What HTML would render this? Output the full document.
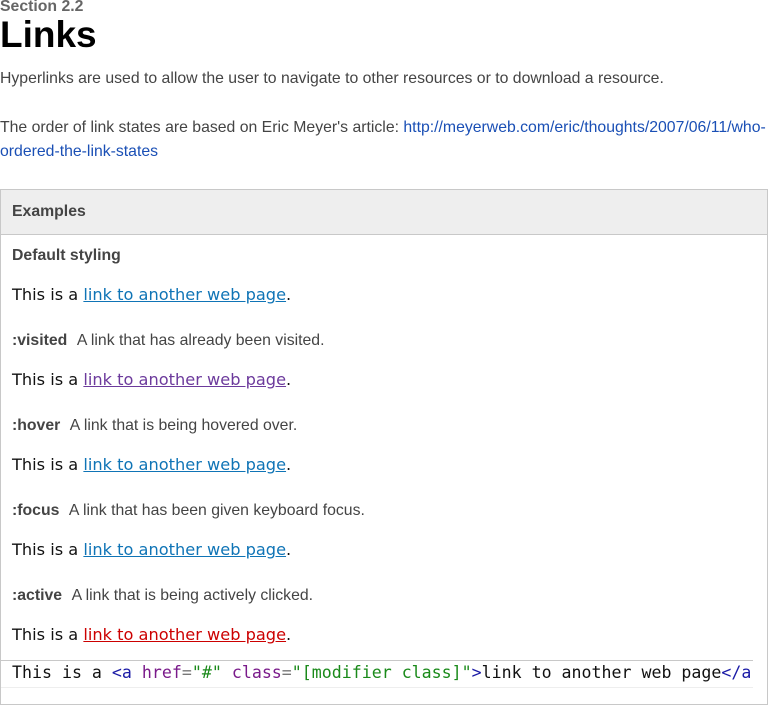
<!DOCTYPE html>
<html><head><meta charset="utf-8"><style>
body{margin:0;width:768px;height:705px;overflow:hidden;background:#fff;font-family:"Liberation Sans",Arial,sans-serif;color:#444;position:relative}
.a{position:absolute;white-space:nowrap}
.sec{left:0;top:-2px;font-size:15.8px;font-weight:bold;color:#666}
h1{position:absolute;margin:0;left:0;top:13px;font-size:37px;font-weight:bold;color:#000;line-height:44px}
.p{left:0;font-size:15.8px;color:#444}
.lnk{color:#1a4fb5}
.box{position:absolute;left:0;top:189px;width:766px;height:514px;border:1px solid #c8c8c8}
.hd{position:absolute;left:0;top:0;width:766px;height:44px;background:#eee;border-bottom:1px solid #c8c8c8}
.hd span{position:absolute;left:11px;top:13px;font-size:15.8px;font-weight:bold;color:#444}
.ex{left:11px;font-family:"DejaVu Sans",sans-serif;font-size:16.2px;color:#111}
.lb{left:11px;font-size:15.8px;color:#444}
.lb b{margin-right:6px}
.code{position:absolute;left:0;top:470px;width:752px;height:26px;border-bottom:1px solid #eee;border-top:1px solid #c8c8c8;background:#fff}
.code span.t{position:absolute;left:11px;top:2px;font-family:"DejaVu Sans Mono",monospace;font-size:16.6px;color:#111;white-space:nowrap}
</style></head><body>
<div class="a sec">Section 2.2</div>
<h1>Links</h1>
<div class="a p" style="top:70px">Hyperlinks are used to allow the user to navigate to other resources or to download a resource.</div>
<div class="a p" style="top:119px">The order of link states are based on Eric Meyer's article: <span class="lnk">http://meyerweb.com/eric/thoughts/2007/06/11/who-</span></div>
<div class="a p lnk" style="top:143px">ordered-the-link-states</div>
<div class="box">
<div class="hd"><span>Examples</span></div>
<div class="a lb" style="top:57px"><b>Default styling</b></div>
<div class="a ex" style="top:95px">This is a <u style="color:#0f74b6">link to another web page</u>.</div>
<div class="a lb" style="top:142px"><b>:visited</b> A link that has already been visited.</div>
<div class="a ex" style="top:180px">This is a <u style="color:#6c3a9c">link to another web page</u>.</div>
<div class="a lb" style="top:227px"><b>:hover</b> A link that is being hovered over.</div>
<div class="a ex" style="top:265px">This is a <u style="color:#0f74b6">link to another web page</u>.</div>
<div class="a lb" style="top:312px"><b>:focus</b> A link that has been given keyboard focus.</div>
<div class="a ex" style="top:350px">This is a <u style="color:#0f74b6">link to another web page</u>.</div>
<div class="a lb" style="top:397px"><b>:active</b> A link that is being actively clicked.</div>
<div class="a ex" style="top:435px">This is a <u style="color:#cc0000">link to another web page</u>.</div>
<div class="code"><span class="t">This is a <span style="color:#1a1aa6">&lt;a</span> <span style="color:#7a1a8a">href</span><span style="color:#777">=</span><span style="color:#1a8a1a">"#"</span> <span style="color:#7a1a8a">class</span><span style="color:#777">=</span><span style="color:#1a8a1a">"[modifier class]"</span><span style="color:#1a1aa6">&gt;</span>link to another web page<span style="color:#1a1aa6">&lt;/a</span></span></div>
</div>
</body></html>
